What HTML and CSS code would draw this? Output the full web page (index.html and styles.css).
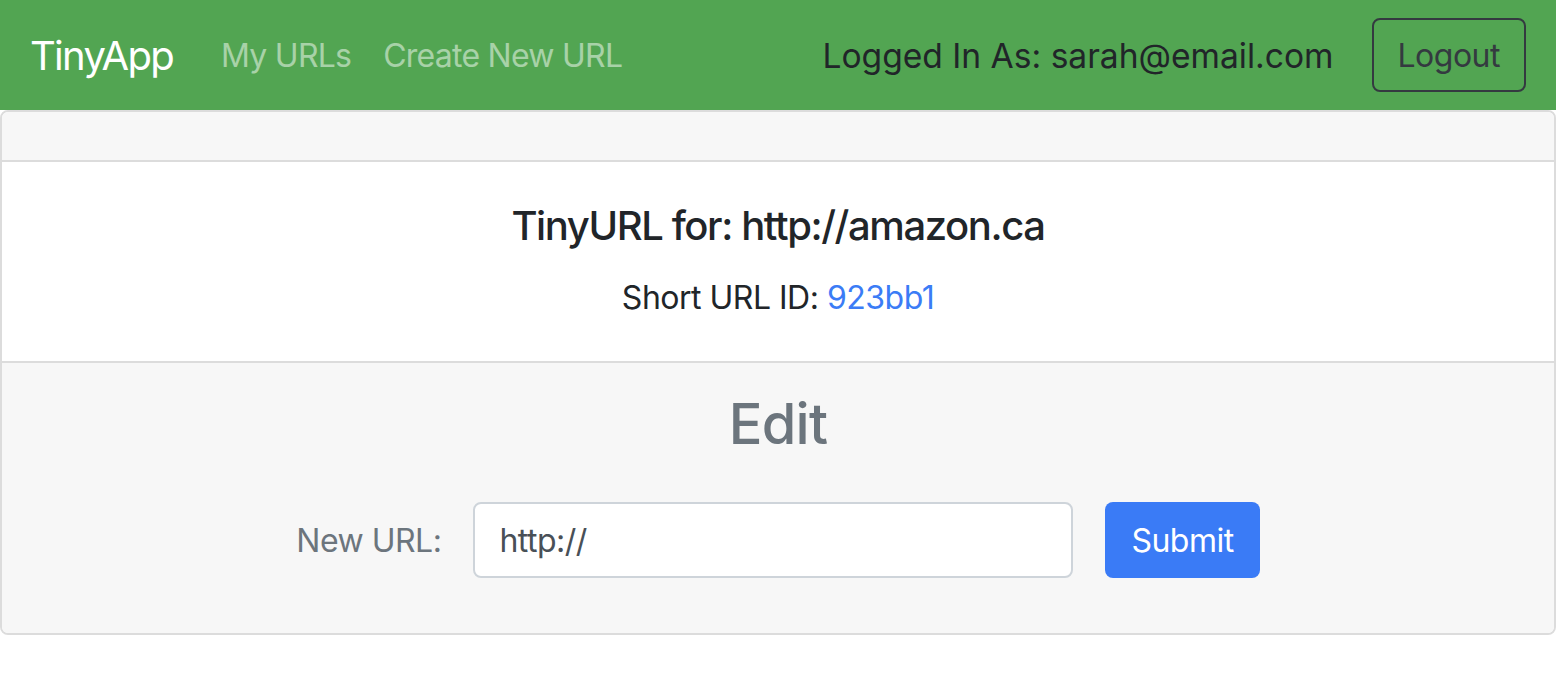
FILE: index.html
```html
<!DOCTYPE html>
<html lang="en">
<head>
<meta charset="utf-8">
<title>TinyApp</title>
<link rel="stylesheet" href="styles.css">
</head>
<body>
<nav class="navbar">
  <a class="brand" href="#">TinyApp</a>
  <a class="nav-link" href="#">My URLs</a>
  <a class="nav-link" href="#">Create New URL</a>
  <div class="spacer"></div>
  <span class="user">Logged In As: sarah@email.com</span>
  <button class="btn-logout" type="button">Logout</button>
</nav>
<div class="card">
  <div class="card-header"></div>
  <div class="card-body">
    <h5 class="card-title">TinyURL for: http://amazon.ca</h5>
    <p class="card-text">Short URL ID: <a class="short-link" href="#">923bb1</a></p>
  </div>
  <div class="card-footer">
    <h3 class="edit-title">Edit</h3>
    <form class="edit-form">
      <label class="form-label" for="newurl">New URL:</label>
      <input class="form-input" id="newurl" type="text" value="http://">
      <button class="btn-submit" type="button">Submit</button>
    </form>
  </div>
</div>
</body>
</html>
```

FILE: styles.css
```css
* { box-sizing: border-box; }
body {
  margin: 0;
  font-family: Inter, "Noto Sans", "Liberation Sans", sans-serif;
  color: #212529;
  background: #fff;
}
.navbar {
  display: flex;
  align-items: center;
  height: 110px;
  padding: 0 30px 0 30px;
  background: #52a552;
}
.brand {
  font-size: 40px;
  color: #fff;
  text-decoration: none;
  margin-right: 32px;
  letter-spacing: -1.7px;
}
.nav-link {
  font-size: 32px;
  padding: 0 16px;
  color: rgba(255,255,255,0.5);
  text-decoration: none;
  letter-spacing: -0.75px;
}
.spacer { flex: 1; }
.user {
  font-size: 33.6px;
  color: #212529;
  margin-right: 38px;
}
.btn-logout {
  height: 74px;
  padding: 0 24px;
  font-family: inherit;
  font-size: 32px;
  color: #343a40;
  background: transparent;
  border: 2px solid #343a40;
  border-radius: 8px;
  letter-spacing: -0.5px;
}
.card {
  border: 2px solid #dcdcdc;
  border-radius: 8px;
  overflow: hidden;
}
.card-header {
  height: 50px;
  background: #f7f7f7;
  border-bottom: 2px solid #dcdcdc;
}
.card-body {
  background: #fff;
  text-align: center;
  padding: 40px 40px 39px;
}
.card-title {
  margin: 0 0 24px;
  font-size: 40px;
  line-height: 48px;
  font-weight: 500;
  letter-spacing: -1.4px;
}
.card-text {
  margin: 0;
  font-size: 32px;
  line-height: 48px;
  letter-spacing: -0.5px;
}
.short-link {
  color: #3b7cf6;
  text-decoration: none;
}
.card-footer {
  background: #f7f7f7;
  border-top: 2px solid #dcdcdc;
  padding: 28px 40px 55px;
  text-align: center;
}
.edit-title {
  margin: 0 0 44px;
  font-size: 56px;
  line-height: 67px;
  font-weight: 500;
  color: #6c757d;
  letter-spacing: -0.8px;
}
.edit-form {
  display: flex;
  justify-content: center;
  align-items: center;
}
.form-label {
  font-size: 32px;
  color: #6c757d;
  margin-right: 32px;
  letter-spacing: -0.5px;
}
.form-input {
  width: 600px;
  height: 76px;
  padding: 0 24px;
  font-family: inherit;
  font-size: 32px;
  color: #495057;
  background: #fff;
  border: 2px solid #ced4da;
  border-radius: 8px;
  margin-right: 32px;
  letter-spacing: -0.5px;
}
.btn-submit {
  height: 76px;
  padding: 0 26px;
  font-family: inherit;
  font-size: 32px;
  color: #fff;
  background: #3a7bf6;
  border: 0;
  border-radius: 8px;
  letter-spacing: -0.5px;
}
```
